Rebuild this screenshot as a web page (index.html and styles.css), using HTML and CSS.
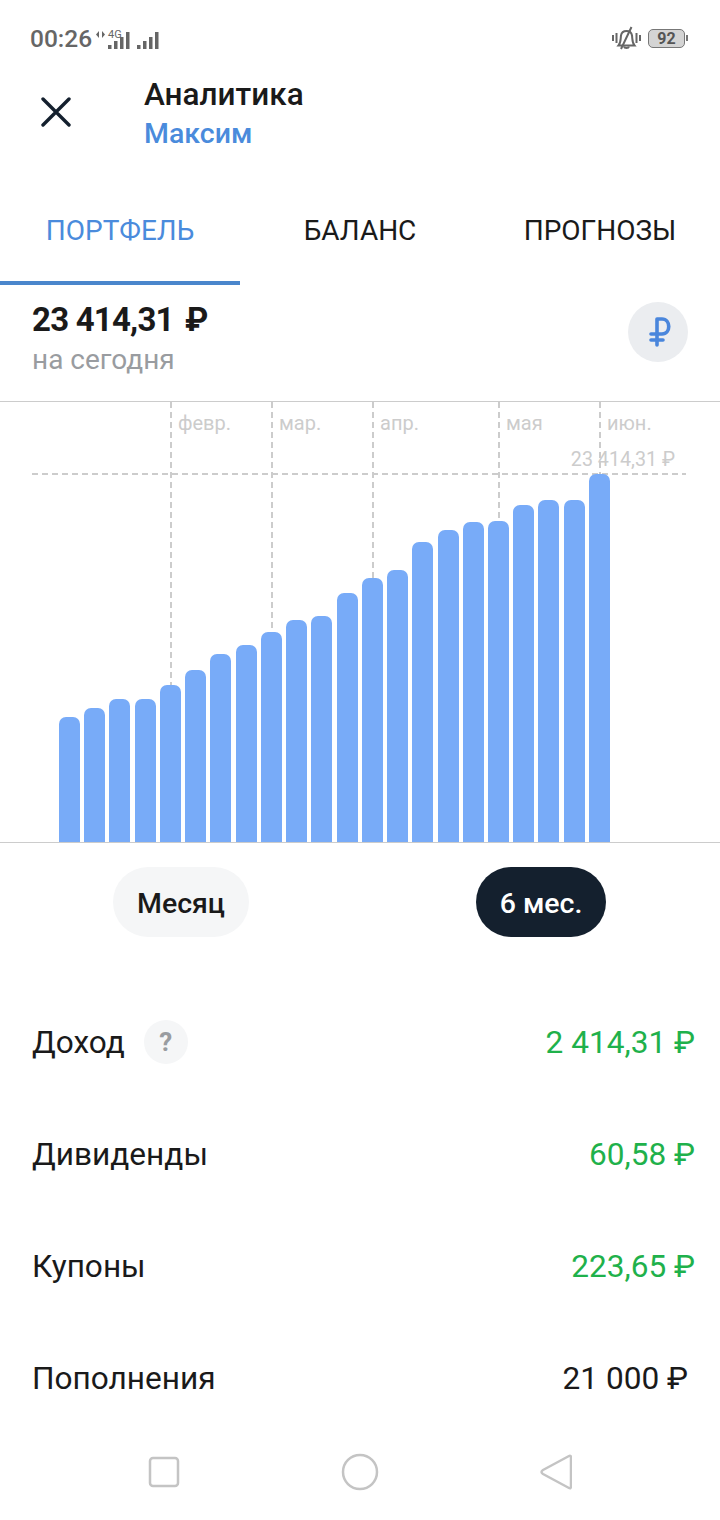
FILE: index.html
```html
<!DOCTYPE html>
<html lang="ru">
<head>
    <meta charset="UTF-8">
    <meta name="viewport" content="width=device-width, initial-scale=1.0">
    <title>Аналитика</title>
    <link rel="stylesheet" href="styles.css">
</head>
<body>
    <div class="screen">
        <div class="status-bar">
            <div class="status-left">
                <span class="status-time">00:26</span>
                <svg class="status-signal" width="72" height="26" viewBox="0 0 72 26">
                    <path d="M4 6 L1 9.5 L4 13 Z M7 6 L10 9.5 L7 13 Z" fill="#666"/>
                    <text x="13" y="13" class="status-4g">4G</text>
                    <rect x="13" y="20" width="3.5" height="4" fill="#666"/>
                    <rect x="19" y="16" width="3.5" height="8" fill="#666"/>
                    <rect x="25" y="12" width="3.5" height="12" fill="#666"/>
                    <rect x="31" y="7" width="3.5" height="17" fill="#666"/>
                    <rect x="42" y="20" width="3.5" height="4" fill="#666"/>
                    <rect x="48" y="16" width="3.5" height="8" fill="#666"/>
                    <rect x="54" y="12" width="3.5" height="12" fill="#666"/>
                    <rect x="60" y="7" width="3.5" height="17" fill="#666"/>
                </svg>
            </div>
            <div class="status-right">
                <svg width="29" height="24" viewBox="0 0 29 24" fill="none" stroke="#666" stroke-width="2">
                    <path d="M1 9v6M4.500 7v10M24.500 7v10M28 9v6"/>
                    <path d="M6.500 19.500c2.500-3 2-6.500 2.500-10 .5-3 3-4.500 5.500-4.500s5 1.500 5.500 4.500c.5 3.500 0 7 2.500 10z"/>
                    <path d="M19.500 1 L9 23M12 20.500c.5 2 4.500 2 5 0"/>
                </svg>
                <div class="battery"><span class="battery-level">92</span></div>
                <span class="battery-tip"></span>
            </div>
        </div>

        <div class="header">
            <svg class="close-icon" width="30" height="30" viewBox="0 0 30 30" fill="none" stroke="#14202e" stroke-width="3.400" stroke-linecap="round">
                <path d="M2 2 L28 28 M28 2 L2 28"/>
            </svg>
            <div class="header-titles">
                <div class="header-title">Аналитика</div>
                <div class="header-sub">Максим</div>
            </div>
        </div>

        <div class="tabs">
            <div class="tab active">ПОРТФЕЛЬ</div>
            <div class="tab">БАЛАНС</div>
            <div class="tab">ПРОГНОЗЫ</div>
        </div>

        <div class="summary">
            <div>
                <div class="summary-total">23 414,31 <span class="rub-bold">₽</span></div>
                <div class="summary-label">на сегодня</div>
            </div>
            <div class="currency-btn">
                <svg width="22" height="30" viewBox="0 0 22 30" fill="none" stroke="#4a86dc" stroke-width="3.600" stroke-linecap="round">
                    <path d="M8 2 V28 M2 23 H14 M2 17 H13 C22 17 22 2 13 2 H8"/>
                </svg>
            </div>
        </div>

        <div class="chart" id="chart">
            <div class="chart-total-line"></div>
            <div class="chart-total">23 414,31 ₽</div>
            <div class="bars" id="bars"></div>
        </div>

        <div class="periods">
            <div class="period">Месяц</div>
            <div class="period selected">6 мес.</div>
        </div>

        <div class="rows">
            <div class="row">
                <div class="row-name">Доход <span class="help">?</span></div>
                <div class="amount plus">2 414,31 ₽</div>
            </div>
            <div class="row">
                <div class="row-name">Дивиденды</div>
                <div class="amount plus">60,58 ₽</div>
            </div>
            <div class="row">
                <div class="row-name">Купоны</div>
                <div class="amount plus">223,65 ₽</div>
            </div>
            <div class="row">
                <div class="row-name">Пополнения</div>
                <div class="amount">21 000 ₽</div>
            </div>
        </div>

        <div class="nav-bar">
            <svg width="32" height="32" viewBox="0 0 32 32" fill="none" stroke="#c4c4c4" stroke-width="2.500">
                <rect x="2" y="2" width="28" height="28" rx="3"/>
            </svg>
            <svg width="38" height="38" viewBox="0 0 38 38" fill="none" stroke="#c4c4c4" stroke-width="2.500">
                <circle cx="19" cy="19" r="17"/>
            </svg>
            <svg width="32" height="36" viewBox="0 0 32 36" fill="none" stroke="#c4c4c4" stroke-width="2.500" stroke-linejoin="round">
                <path d="M29 2 Q31 1 31 4 V32 Q31 35 29 34 L3 20 Q0 18 3 16 Z"/>
            </svg>
        </div>
    </div>

    <script>
        document.addEventListener("DOMContentLoaded", function() {
            const chart = document.querySelector('#chart');
            const bars = document.querySelector('#bars');

            // Bar heights in px, one for each week
            const heights = [125, 134, 143, 143, 157, 172, 188, 197, 210, 222, 226, 249, 264, 272, 300, 312, 320, 321, 337, 342, 342, 368];

            const months = [
                { name: 'февр.', x: 170 },
                { name: 'мар.', x: 271 },
                { name: 'апр.', x: 372 },
                { name: 'мая', x: 498 },
                { name: 'июн.', x: 599 }
            ];

            months.forEach(function(month) {
                const line = document.createElement('div');
                line.classList.add('month-line');
                line.style.left = month.x + 'px';
                chart.appendChild(line);

                const label = document.createElement('div');
                label.classList.add('month-label');
                label.style.left = (month.x + 8) + 'px';
                label.textContent = month.name;
                chart.appendChild(label);
            });

            heights.forEach(function(height) {
                const bar = document.createElement('div');
                bar.classList.add('bar');
                bar.style.height = height + 'px';
                bars.appendChild(bar);
            });
        });
    </script>
</body>
</html>
```

FILE: styles.css
```css
body {
    font-family: Roboto, "Noto Sans", sans-serif;
    background-color: #fff;
    color: #1a1a1a;
    margin: 0;
    padding: 0;
}
.screen {
    position: relative;
    width: 720px;
    height: 1520px;
    overflow: hidden;
}
.status-bar {
    height: 76px;
    padding: 0 32px 0 30px;
    display: flex;
    justify-content: space-between;
    align-items: center;
    color: #666;
}
.status-left,
.status-right {
    display: flex;
    align-items: center;
}
.status-time {
    font-size: 24.500px;
    font-weight: 500;
}
.status-signal {
    margin-left: 3px;
}
.status-4g {
    font-size: 11px;
    fill: #666;
}
.battery {
    width: 35px;
    height: 17px;
    margin-left: 7px;
    border: 1.500px solid #777;
    border-radius: 5px;
    background-color: #d4d4d4;
    display: flex;
    justify-content: center;
    align-items: center;
}
.battery-level {
    font-size: 16px;
    font-weight: 700;
    color: #555;
}
.battery-tip {
    width: 2px;
    height: 6px;
    margin-left: 1px;
    background-color: #777;
}
.header {
    height: 78px;
    display: flex;
    align-items: center;
}
.close-icon {
    margin-left: 41px;
    margin-top: -7px;
}
.header-titles {
    margin-left: 73px;
}
.header-title {
    font-size: 31.500px;
    font-weight: 500;
    line-height: 38px;
    color: #1a1a1a;
}
.header-sub {
    font-size: 28.500px;
    font-weight: 500;
    line-height: 40px;
    color: #4a8bdc;
}
.tabs {
    margin-top: 22px;
    height: 109px;
    display: flex;
}
.tab {
    width: 240px;
    box-sizing: border-box;
    height: 109px;
    display: flex;
    justify-content: center;
    align-items: center;
    font-size: 28px;
    color: #1a1a1a;
}
.tab.active {
    color: #4a8bdc;
    border-bottom: 4px solid #4a86cc;
    padding-top: 4px;
}
.summary {
    height: 116px;
    padding: 0 32px;
    display: flex;
    justify-content: space-between;
    align-items: flex-start;
    border-bottom: 1px solid #ccc;
}
.summary-total {
    margin-top: 15px;
    font-size: 33px;
    font-weight: 700;
    letter-spacing: -0.800px;
    line-height: 40px;
}
.rub-bold {
    margin-left: 4px;
}
.summary-label {
    font-size: 28px;
    line-height: 39px;
    color: #999ca0;
}
.currency-btn {
    width: 60px;
    height: 60px;
    margin-top: 17px;
    border-radius: 50%;
    background-color: #ebedf0;
    display: flex;
    justify-content: center;
    align-items: center;
}
.currency-btn svg {
    margin-left: 3px;
}
.chart {
    position: relative;
    height: 440px;
    border-bottom: 1px solid #ccc;
}
.month-line {
    position: absolute;
    top: 0;
    bottom: 0;
    width: 2px;
    background-image: repeating-linear-gradient(to bottom, #ccc 0, #ccc 6px, transparent 6px, transparent 10px);
}
.month-label {
    position: absolute;
    top: 9px;
    font-size: 20px;
    color: #ccc;
}
.chart-total-line {
    position: absolute;
    top: 71px;
    left: 32px;
    width: 654px;
    height: 2px;
    background-image: repeating-linear-gradient(to right, #ccc 0, #ccc 6px, transparent 6px, transparent 10px);
}
.chart-total {
    position: absolute;
    top: 46px;
    right: 45px;
    font-size: 19.700px;
    color: #ccc;
}
.bars {
    position: absolute;
    z-index: 1;
    left: 59px;
    bottom: 0;
    display: flex;
    align-items: flex-end;
    gap: 4.240px;
}
.bar {
    width: 21px;
    background-color: #78abf8;
    border-radius: 7px 7px 0 0;
}
.periods {
    position: relative;
    height: 70px;
    margin-top: 24px;
}
.period {
    position: absolute;
    top: 0;
    left: 113px;
    width: 136px;
    height: 70px;
    padding-top: 2px;
    box-sizing: border-box;
    border-radius: 35px;
    background-color: #f5f6f7;
    display: flex;
    justify-content: center;
    align-items: center;
    font-size: 28.500px;
    font-weight: 500;
}
.period.selected {
    left: 476px;
    width: 130px;
    background-color: #14202e;
    color: #fff;
}
.rows {
    margin-top: 49px;
}
.row {
    height: 112px;
    padding: 0 32px;
    display: flex;
    justify-content: space-between;
    align-items: center;
    font-size: 31.600px;
}
.row-name {
    display: flex;
    align-items: center;
}
.help {
    width: 44px;
    height: 44px;
    margin-left: 19px;
    border-radius: 50%;
    background-color: #f5f6f7;
    color: #999ca0;
    font-size: 26px;
    font-weight: 700;
    display: flex;
    justify-content: center;
    align-items: center;
}
.amount.plus {
    color: #1fb14b;
    margin-right: -7px;
}
.nav-bar {
    position: absolute;
    left: 0;
    right: 0;
    bottom: 0;
    height: 96px;
    box-sizing: border-box;
    background-color: #fff;
    display: flex;
    align-items: center;
    justify-content: space-between;
    padding-left: 148px;
    padding-right: 148px;
}
```
